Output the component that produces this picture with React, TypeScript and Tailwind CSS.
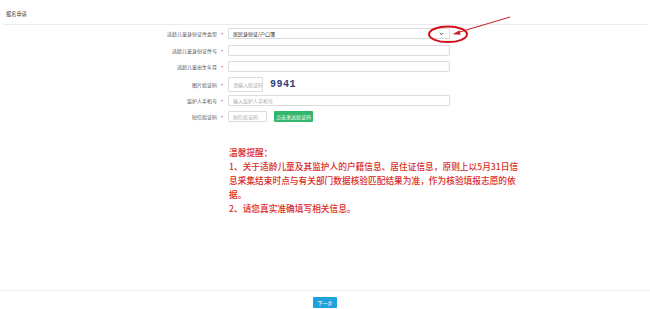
import React from "react";

const Label = ({ text }: { text: string }) => (
  <div className="w-[228px] shrink-0 flex items-center justify-end pr-[3px] text-[5px] leading-none text-[#555]">
    <span>{text}</span>
    <span className="ml-[2px] text-[#e4393c] text-[6px]">·</span>
  </div>
);

const inputCls =
  "h-full border border-[#dcdcdc] rounded-[1px] bg-white flex items-center px-[4px] text-[5px] leading-none whitespace-nowrap overflow-hidden";

export default function App() {
  return (
    <div className="relative w-[650px] h-[309px] bg-white flex flex-col font-['Noto_Sans_CJK_SC','Noto_Sans',sans-serif]">
      <div className="h-[25px] mx-[3px] border-b border-[#ececec] flex items-center pl-[3px] pt-[4px] text-[5.2px] leading-none text-[#333]">
        报名申请
      </div>

      <div className="flex flex-col">
        <div className="flex h-[11px] mt-[3px]">
          <Label text="适龄儿童身份证件类型" />
          <div className={`${inputCls} w-[222px] justify-between text-[#222]`}>
            <span>居民身份证/户口簿</span>
            <svg width="5" height="4" viewBox="0 0 5 4" className="mr-[1px]">
              <path d="M0.8 1 L2.5 2.7 L4.2 1" stroke="#333" strokeWidth="0.9" fill="none" />
            </svg>
          </div>
        </div>
        <div className="flex h-[11px] mt-[6px]">
          <Label text="适龄儿童身份证件号" />
          <div className={`${inputCls} w-[222px]`} />
        </div>
        <div className="flex h-[11px] mt-[5px]">
          <Label text="适龄儿童出生年月" />
          <div className={`${inputCls} w-[222px]`} />
        </div>
        <div className="flex h-[15px] mt-[5px]">
          <Label text="图片验证码" />
          <div className={`${inputCls} w-[35px] text-[#aaa] px-[2px]`}>请输入验证码</div>
          <div className="ml-[7px] flex items-center font-['Liberation_Mono',monospace] font-bold text-[10px] tracking-[0.5px] text-[#2c4282] leading-none">
            9941
          </div>
        </div>
        <div className="flex h-[11px] mt-[3px]">
          <Label text="监护人手机号" />
          <div className={`${inputCls} w-[222px] text-[#aaa]`}>输入监护人手机号</div>
        </div>
        <div className="flex h-[11px] mt-[5px]">
          <Label text="短信验证码" />
          <div className={`${inputCls} w-[39px] text-[#aaa]`}>短信验证码</div>
          <div className="ml-[7px] w-[39px] h-full bg-[#31b66b] rounded-[1px] flex items-center justify-center text-[5px] leading-none text-white whitespace-nowrap">
            点击发送验证码
          </div>
        </div>
      </div>

      <div className="ml-[229px] mt-[24px] w-[292px] text-[8.7px] leading-[13.9px] font-medium text-[#d92b25]">
        <p>温馨提醒：</p>
        <p>1、关于适龄儿童及其监护人的户籍信息、居住证信息，原则上以5月31日信息采集结束时点与有关部门数据核验匹配结果为准，作为核验填报志愿的依据。</p>
        <p>2、请您真实准确填写相关信息。</p>
      </div>

      <div className="flex-1" />
      <div className="h-[19px] border-t border-[#efefef] flex justify-center">
        <div className="mt-[6px] w-[24px] h-[11px] bg-[#1ea2dc] rounded-[1px] flex items-center justify-center text-[5px] leading-none text-white">
          下一步
        </div>
      </div>

      <svg className="absolute left-0 top-0 pointer-events-none" width="650" height="309">
        <ellipse cx="448" cy="34.3" rx="19" ry="7.8" stroke="#d2101c" strokeWidth="2" fill="none" />
        <line x1="510" y1="17" x2="458" y2="32.5" stroke="#c9252f" strokeWidth="1.1" />
        <polygon points="452.5,34.3 459.5,30.2 460.5,34.8" fill="#c9252f" />
      </svg>
    </div>
  );
}
